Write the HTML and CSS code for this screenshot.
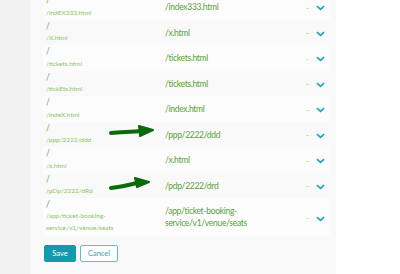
FILE: index.html
```html
<!DOCTYPE html>
<html lang="en">
<head>
    <meta charset="UTF-8">
    <title>Redirect rules</title>
    <link rel="stylesheet" href="styles.css">
</head>
<body>
    <div class="page">
        <div class="sidebar"></div>
        <div class="panel">
            <div class="rules">
                <div class="rule">
                    <div class="from"><span class="slash">/</span><span>/indEX333.html</span></div>
                    <div class="to">/index333.html</div>
                    <div class="dash">-</div>
                    <div class="toggle"><svg viewBox="0 0 10 6" width="9" height="6"><path d="M1 1 L5 4.6 L9 1" /></svg></div>
                </div>
                <div class="rule">
                    <div class="from"><span class="slash">/</span><span>/X.html</span></div>
                    <div class="to">/x.html</div>
                    <div class="dash">-</div>
                    <div class="toggle"><svg viewBox="0 0 10 6" width="9" height="6"><path d="M1 1 L5 4.6 L9 1" /></svg></div>
                </div>
                <div class="rule">
                    <div class="from"><span class="slash">/</span><span>/tickets.html</span></div>
                    <div class="to">/tickets.html</div>
                    <div class="dash">-</div>
                    <div class="toggle"><svg viewBox="0 0 10 6" width="9" height="6"><path d="M1 1 L5 4.6 L9 1" /></svg></div>
                </div>
                <div class="rule">
                    <div class="from"><span class="slash">/</span><span>/tickEts.html</span></div>
                    <div class="to">/tickets.html</div>
                    <div class="dash">-</div>
                    <div class="toggle"><svg viewBox="0 0 10 6" width="9" height="6"><path d="M1 1 L5 4.6 L9 1" /></svg></div>
                </div>
                <div class="rule">
                    <div class="from"><span class="slash">/</span><span>/indeX.html</span></div>
                    <div class="to">/index.html</div>
                    <div class="dash">-</div>
                    <div class="toggle"><svg viewBox="0 0 10 6" width="9" height="6"><path d="M1 1 L5 4.6 L9 1" /></svg></div>
                </div>
                <div class="rule">
                    <div class="from"><span class="slash">/</span><span>/ppp/2222/ddd</span></div>
                    <div class="to">/ppp/2222/ddd</div>
                    <div class="dash">-</div>
                    <div class="toggle"><svg viewBox="0 0 10 6" width="9" height="6"><path d="M1 1 L5 4.6 L9 1" /></svg></div>
                </div>
                <div class="rule">
                    <div class="from"><span class="slash">/</span><span>/x.html</span></div>
                    <div class="to">/x.html</div>
                    <div class="dash">-</div>
                    <div class="toggle"><svg viewBox="0 0 10 6" width="9" height="6"><path d="M1 1 L5 4.6 L9 1" /></svg></div>
                </div>
                <div class="rule">
                    <div class="from"><span class="slash">/</span><span>/pDp/2222/dRd</span></div>
                    <div class="to">/pdp/2222/drd</div>
                    <div class="dash">-</div>
                    <div class="toggle"><svg viewBox="0 0 10 6" width="9" height="6"><path d="M1 1 L5 4.6 L9 1" /></svg></div>
                </div>
                <div class="rule rule-tall">
                    <div class="from"><span class="slash">/</span><span>/app/ticket-booking-<br>service/v1/venue/seats</span></div>
                    <div class="to">/app/ticket-booking-<br>service/v1/venue/seats</div>
                    <div class="dash">-</div>
                    <div class="toggle"><svg viewBox="0 0 10 6" width="9" height="6"><path d="M1 1 L5 4.6 L9 1" /></svg></div>
                </div>
            </div>

            <div class="actions">
                <button class="button save">Save</button>
                <button class="button cancel">Cancel</button>
            </div>

            <!-- hand-drawn markers on the screenshot -->
            <svg class="marker marker-one" viewBox="0 0 46 14" width="46" height="14">
                <path d="M2 8 C12 7 22 7 32 6" />
                <path class="head" d="M30 1 L44 5 L31 11 Z" />
            </svg>
            <svg class="marker marker-two" viewBox="0 0 42 14" width="42" height="14">
                <path d="M2 11 C12 10 20 8 28 6" />
                <path class="head" d="M26 1 L40 5 L28 10 Z" />
            </svg>
        </div>
    </div>
</body>
</html>
```

FILE: styles.css
```css
body {
    margin: 0;
    padding: 0;
    background: #ffffff;
    font-family: 'Lato', 'Liberation Sans', sans-serif;
}
.page {
    display: flex;
    height: 274px;
    overflow: hidden;
}
.sidebar {
    width: 30px;
    background-color: #f2f2f2;
}
.panel {
    position: relative;
    width: 284px;
    padding: 0 6px 0 16px;
    background-color: #f9f9f9;
}
.rules {
    margin-top: -6px;
    margin-left: -3px;
}
.rule {
    display: grid;
    grid-template-columns: 119px 1fr 10px 14px;
    align-items: center;
    height: 25.5px;
    padding-left: 3px;
}
.rule:nth-child(odd) {
    background-color: #fcfcfc;
}
.rule-tall {
    height: 38px;
}
.from {
    display: flex;
    flex-direction: column;
    align-self: start;
    font-size: 6.5px;
    line-height: 12.5px;
    color: #8cc466;
}
.from .slash {
    font-size: 8.5px;
    color: #6aa84f;
}
.rule-tall .from {
    line-height: 12px;
}
.to {
    padding-top: 1px;
    font-size: 8.5px;
    letter-spacing: -0.3px;
    line-height: 12px;
    color: #58a13a;
}
.rule-tall .to {
    padding-top: 0;
}
.dash {
    font-size: 8px;
    color: #9ccf88;
    padding-top: 2px;
}
.toggle {
    display: flex;
    align-items: center;
    padding-top: 3px;
}
.toggle svg path {
    fill: none;
    stroke: #1ea5c2;
    stroke-width: 1.8;
}
.actions {
    display: flex;
    gap: 4px;
    margin-top: 9px;
    margin-left: -2px;
}
.button {
    box-sizing: border-box;
    height: 17px;
    padding: 0;
    font-family: 'Lato', 'Liberation Sans', sans-serif;
    font-size: 7.5px;
    border-radius: 2px;
    cursor: pointer;
}
.save {
    width: 32px;
    background-color: #139aac;
    border: 1px solid #139aac;
    color: #ffffff;
}
.cancel {
    width: 38px;
    background-color: #ffffff;
    border: 1px solid #5bbfcc;
    color: #3a9fb0;
}
.marker {
    position: absolute;
}
.marker path {
    fill: none;
    stroke: #0b6a0b;
    stroke-width: 4;
    stroke-linecap: round;
}
.marker path.head {
    fill: #0b6a0b;
    stroke-width: 2;
    stroke-linejoin: round;
}
.marker-one {
    left: 79px;
    top: 125px;
}
.marker-two {
    left: 79px;
    top: 177px;
}
```
